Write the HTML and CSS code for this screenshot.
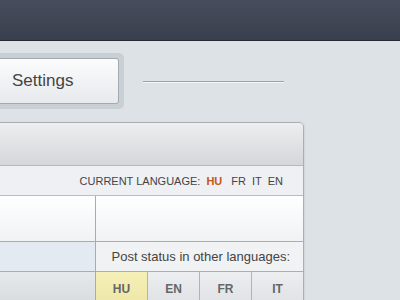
FILE: index.html
```html
<!DOCTYPE html>
<html>
<head>
<meta charset="utf-8">
<link rel="stylesheet" href="styles.css">
</head>
<body>
<div class="topbar"></div>
<div class="tabrow">
  <div class="tabframe">
    <div class="tabbtn">Settings</div>
  </div>
  <div class="rule"></div>
</div>
<div class="panel">
  <div class="panel-head"></div>
  <div class="langbar">
    <span class="label">CURRENT LANGUAGE:</span>
    <span class="lang active">HU</span>
    <span class="lang">FR</span>
    <span class="lang">IT</span>
    <span class="lang">EN</span>
  </div>
  <div class="grid">
    <div class="c left r1"></div>
    <div class="c right r1 span"></div>
    <div class="c left r2"></div>
    <div class="c right r2 span status">Post status in other languages:</div>
    <div class="c left r3"></div>
    <div class="c code hu">HU</div>
    <div class="c code">EN</div>
    <div class="c code">FR</div>
    <div class="c code last">IT</div>
  </div>
</div>
</body>
</html>
```

FILE: styles.css
```css
html, body {
  margin: 0;
  padding: 0;
}
body {
  width: 400px;
  height: 300px;
  overflow: hidden;
  background: #dce2e5;
  font-family: "Liberation Sans", Arial, sans-serif;
  color: #444;
}
.topbar {
  height: 40px;
  background: linear-gradient(#474d5d, #3a3f4d);
  border-bottom: 1px solid #262a33;
}
.tabrow {
  display: flex;
  align-items: center;
  margin-top: 12px;
  margin-left: -10px;
}
.tabframe {
  background: #c9d0d5;
  border-radius: 5px;
  padding: 5px;
  height: 46px;
}
.tabbtn {
  box-sizing: border-box;
  width: 124px;
  height: 46px;
  border: 1px solid #a4aab0;
  border-radius: 3px;
  background: linear-gradient(#fbfcfc, #e7e9ec);
  padding-left: 16px;
  font-size: 17px;
  line-height: 43px;
  color: #444;
}
.rule {
  margin-left: 19px;
  width: 141px;
  height: 1px;
  background: #9ca1a5;
  border-bottom: 1px solid #f3f5f6;
  margin-top: 1px;
}
.panel {
  box-sizing: border-box;
  width: 324px;
  margin-left: -20px;
  margin-top: 13px;
  border: 1px solid #a9afb4;
  border-radius: 0 5px 0 0;
  overflow: hidden;
  box-shadow: 1px 0 2px rgba(0,0,0,0.06);
}
.panel-head {
  height: 42px;
  background: linear-gradient(#eceeef, #d4d7d9);
  border-bottom: 1px solid #b6babd;
}
.langbar {
  height: 29px;
  display: flex;
  justify-content: flex-end;
  align-items: center;
  padding-right: 20px;
  background: #eef0f3;
  border-bottom: 1px solid #b9bdc1;
  font-size: 11px;
  color: #444;
}
.langbar .label {
  margin-right: 6px;
}
.langbar .lang {
  margin-left: 6px;
}
.langbar .lang.active {
  margin-left: 0;
  margin-right: 3px;
  color: #c4561b;
  font-weight: bold;
}
.grid {
  display: grid;
  grid-template-columns: 115px 52px 52px 52px 51px;
}
.c {
  box-sizing: border-box;
}
.left {
  border-right: 1px solid #a9abad;
}
.span {
  grid-column: 2 / 6;
}
.r1 {
  height: 46px;
  background: linear-gradient(#ffffff, #f1f2f4);
  border-bottom: 1px solid #a9adb0;
}
.r2 {
  height: 30px;
  border-bottom: 1px solid #a9adb0;
}
.left.r2 {
  background: #e3eaf1;
}
.right.r2 {
  background: #f1f2f4;
}
.status {
  font-size: 13px;
  text-align: right;
  padding-right: 13px;
  line-height: 30px;
  color: #444;
}
.r3 {
  height: 40px;
  background: linear-gradient(#e6e9ec, #d3d7db);
}
.code {
  height: 40px;
  border-right: 1px solid #b0b4b8;
  background: linear-gradient(#eceef0, #dcdfe2);
  text-align: center;
  font-size: 12px;
  font-weight: bold;
  color: #666;
  line-height: 34px;
}
.code.last {
  border-right: none;
}
.code.hu {
  background: linear-gradient(#f5f0b8, #ece4a4);
}
```
